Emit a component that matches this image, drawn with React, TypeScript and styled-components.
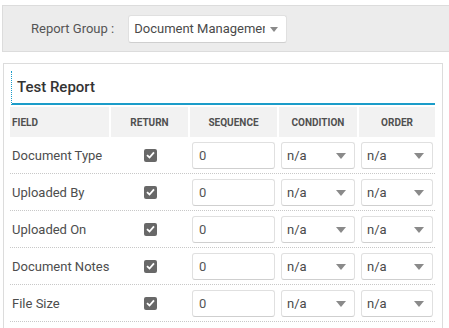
import styled, { createGlobalStyle } from "styled-components";

const GlobalStyle = createGlobalStyle`
    html, body {
        margin: 0;
        padding: 0;
        background: #fff;
        overflow: hidden;
    }
    body {
        font-family: Roboto, "Liberation Sans", Arial, sans-serif;
        color: #444;
    }
`;

const Page = styled.div`
    width: 449px;
    padding-top: 5px;
`;

const FilterBar = styled.div`
    display: flex;
    align-items: center;
    gap: 14px;
    height: 45px;
    margin-left: 2px;
    margin-right: -6px;
    padding-left: 28px;
    background: #ececec;
    border: 1px solid #dcdcdc;
`;

const FilterLabel = styled.span`
    font-size: 13px;
    color: #555;
`;

const Dropdown = styled.div<{ $width: number; $height?: number; $arrowGap?: number; $arrow?: number }>`
    position: relative;
    display: flex;
    align-items: center;
    box-sizing: border-box;
    width: ${(p) => p.$width}px;
    height: ${(p) => p.$height ?? 27}px;
    padding: 0 ${(p) => p.$arrowGap ?? 22}px 0 5px;
    background: #fff;
    border: 1px solid #e0e0e0;
    border-bottom-color: #cfcfcf;
    border-radius: 3px;
    font-size: 13px;
    color: #4a4a4a;
    white-space: nowrap;
    overflow: hidden;

    &::after {
        content: "";
        position: absolute;
        right: 8px;
        top: 50%;
        margin-top: -2px;
        border-left: ${(p) => p.$arrow ?? 5}px solid transparent;
        border-right: ${(p) => p.$arrow ?? 5}px solid transparent;
        border-top: ${(p) => (p.$arrow ?? 5) + 1}px solid #8a8a8a;
    }
`;

const DropdownText = styled.span`
    overflow: hidden;
    text-overflow: clip;
`;

const Panel = styled.div`
    width: 440px;
    box-sizing: border-box;
    margin: 11px 0 0 3px;
    padding: 7px 7px 0 7px;
    border: 1px solid #dcdcdc;
    border-bottom: none;
    height: 270px;
`;

const PanelTitle = styled.h2`
    margin: 0;
    height: 32px;
    display: flex;
    align-items: center;
    padding-left: 5px;
    border-left: 1px dotted #1b9cc9;
    border-bottom: 2px solid #1b9cc9;
    font-size: 15px;
    font-weight: 500;
    color: #333;
`;

const columns = "99px 77px 87px 78px 76px";

const HeaderRow = styled.div`
    display: grid;
    grid-template-columns: ${columns};
    column-gap: 2px;
    margin: 2px 0 0 -1px;
`;

const HeaderCell = styled.div<{ $left?: boolean }>`
    height: 30px;
    display: flex;
    align-items: center;
    justify-content: ${(p) => (p.$left ? "flex-start" : "center")};
    padding-left: ${(p) => (p.$left ? "2px" : "0")};
    background: #f2f2f2;
    font-size: 10px;
    font-weight: 700;
    color: #505050;
    text-transform: uppercase;
`;

const Row = styled.div`
    display: grid;
    grid-template-columns: ${columns};
    column-gap: 2px;
    height: 36px;
    margin-left: -1px;
    border-bottom: 1px dotted #c8c8c8;
    align-items: center;
`;

const FieldName = styled.div`
    padding-left: 2px;
    font-size: 13px;
    color: #4d4d4d;
    white-space: nowrap;
`;

const CheckCell = styled.div`
    display: flex;
    justify-content: center;
    padding-left: 2px;
`;

const CheckBox = styled.span`
    width: 13px;
    height: 13px;
    border-radius: 2px;
    background: #686868;
    display: flex;
    align-items: center;
    justify-content: center;
`;

const InputCell = styled.div`
    padding: 0 2px;
`;

const SequenceInput = styled.input`
    box-sizing: border-box;
    width: 83px;
    height: 27px;
    padding: 0 6px;
    border: 1px solid #e0e0e0;
    border-bottom-color: #cfcfcf;
    border-radius: 3px;
    font-family: inherit;
    font-size: 13px;
    color: #555;
    outline: none;
`;

const fields = ["Document Type", "Uploaded By", "Uploaded On", "Document Notes", "File Size"];

function Check() {
    return (
        <CheckBox>
            <svg width="9" height="8" viewBox="0 0 9 8">
                <path d="M1 4.2 L3.5 6.5 L8 1.3" fill="none" stroke="#fff" strokeWidth="1.8" />
            </svg>
        </CheckBox>
    );
}

function App() {
    return (
        <Page>
            <GlobalStyle />
            <FilterBar>
                <FilterLabel>Report Group :</FilterLabel>
                <Dropdown $width={159} $height={28} $arrowGap={21} $arrow={4}>
                    <DropdownText>Document Management</DropdownText>
                </Dropdown>
            </FilterBar>
            <Panel>
                <PanelTitle>Test Report</PanelTitle>
                <HeaderRow>
                    <HeaderCell $left>Field</HeaderCell>
                    <HeaderCell>Return</HeaderCell>
                    <HeaderCell>Sequence</HeaderCell>
                    <HeaderCell>Condition</HeaderCell>
                    <HeaderCell>Order</HeaderCell>
                </HeaderRow>
                {fields.map((name) => (
                    <Row key={name}>
                        <FieldName>{name}</FieldName>
                        <CheckCell>
                            <Check />
                        </CheckCell>
                        <InputCell>
                            <SequenceInput defaultValue="0" readOnly />
                        </InputCell>
                        <InputCell>
                            <Dropdown $width={74}>n/a</Dropdown>
                        </InputCell>
                        <InputCell>
                            <Dropdown $width={72}>n/a</Dropdown>
                        </InputCell>
                    </Row>
                ))}
            </Panel>
        </Page>
    );
}

export default App;
